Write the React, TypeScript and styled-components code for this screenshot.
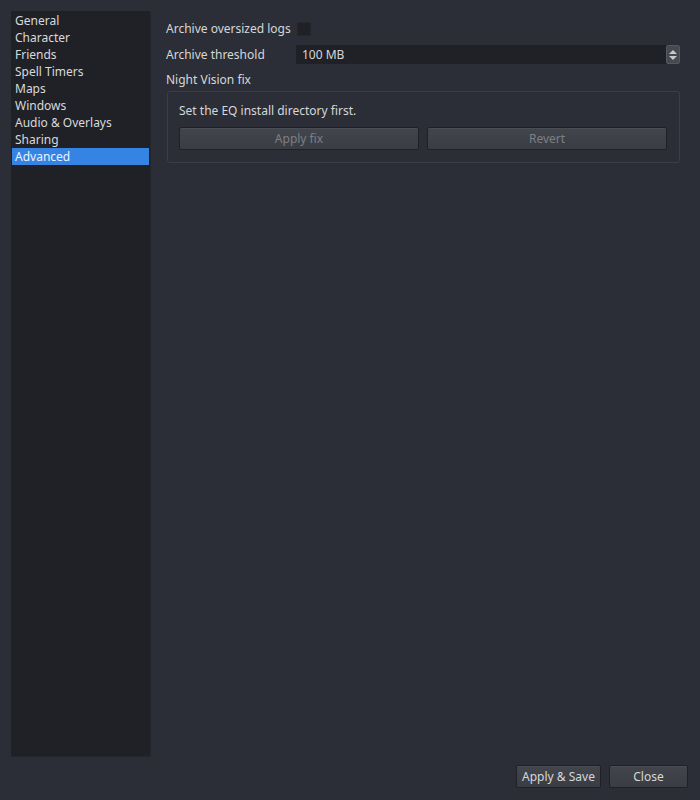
import React, { useState } from 'react'
import styled, { createGlobalStyle } from 'styled-components'

const GlobalStyle = createGlobalStyle`
  html, body {
    margin: 0;
    padding: 0;
    background: #2b2e36;
  }
  body {
    font-family: 'Noto Sans', 'Open Sans', sans-serif;
    font-size: 12px;
    color: #d6d7da;
  }
`

const Window = styled.div`
  width: 700px;
  height: 800px;
  box-sizing: border-box;
  padding: 11px 11px 12px 11px;
  display: flex;
  flex-direction: column;
  background: #2b2e36;
`

const Body = styled.div`
  flex: 1;
  display: flex;
  gap: 15px;
  min-height: 0;
`

const NavList = styled.ul`
  list-style: none;
  margin: 0;
  padding: 1px;
  width: 140px;
  box-sizing: border-box;
  background: #202126;
  border: 1px solid #25272d;
  border-width: 0 1px 1px 0;
`

const NavItem = styled.li<{ $active?: boolean }>`
  height: 17px;
  line-height: 17px;
  padding-left: 3px;
  color: ${({ $active }) => ($active ? '#eef3fb' : '#d8d9dc')};
  background: ${({ $active }) => ($active ? '#3584e4' : 'transparent')};
  white-space: nowrap;
  cursor: default;
`

const Page = styled.div`
  flex: 1;
  display: flex;
  flex-direction: column;
  padding: 7px 9px 0 0;
`

const FormRow = styled.div`
  display: flex;
  align-items: center;
  min-height: 21px;
  margin-bottom: 5px;
`

const Label = styled.span<{ $width?: number }>`
  width: ${({ $width }) => ($width ? `${$width}px` : 'auto')};
  flex-shrink: 0;
  white-space: nowrap;
`

const Check = styled.span`
  width: 14px;
  height: 14px;
  margin-left: 6px;
  border-radius: 2px;
  background: #202126;
  box-shadow: inset 0 0 0 1px #25272d;
`

const SpinBox = styled.div`
  flex: 1;
  height: 19px;
  display: flex;
  align-items: stretch;
  background: #202126;
  border-radius: 2px;
`

const SpinValue = styled.span`
  flex: 1;
  padding-left: 6px;
  line-height: 19px;
  color: #d6d7da;
`

const SpinArrows = styled.span`
  width: 14px;
  display: flex;
  align-items: center;
  justify-content: center;
  background: #464950;
  border: 1px solid #55585f;
  border-radius: 2px;
  box-sizing: border-box;
`

const SectionTitle = styled.div`
  line-height: 17px;
  margin-top: 1px;
  margin-bottom: 3px;
`

const Group = styled.fieldset`
  margin: 0 0 0 1px;
  padding: 10px 12px 12px 11px;
  border: 1px solid #3b3e46;
  border-radius: 3px;
  display: flex;
  flex-direction: column;
  gap: 7px;
  min-inline-size: 0;
`

const Note = styled.div`
  line-height: 18px;
`

const ButtonRow = styled.div`
  display: flex;
  gap: 8px;
`

const Button = styled.button<{ $grow?: boolean; $width?: number }>`
  flex: ${({ $grow }) => ($grow ? '1 1 0' : '0 0 auto')};
  width: ${({ $width }) => ($width ? `${$width}px` : 'auto')};
  height: 23px;
  padding: 0;
  white-space: nowrap;
  font-family: inherit;
  font-size: 12px;
  color: #d6d7da;
  background: linear-gradient(#42454c, #3a3d44);
  border: 1px solid #1f2126;
  border-radius: 2px;
  box-shadow: inset 0 1px 0 #4a4d54;

  &:disabled {
    color: #7c7f85;
  }
`

const Footer = styled.div`
  display: flex;
  justify-content: flex-end;
  gap: 8px;
  margin: 8px 1px 0 0;
`

const SpinGlyph = () => (
  <svg width="10" height="14" viewBox="0 0 10 14">
    <path d="M1 6 L5 2 L9 6 Z" fill="#c8c9cc" />
    <path d="M1 8 L5 12 L9 8 Z" fill="#c8c9cc" />
  </svg>
)

const sections = [
  'General',
  'Character',
  'Friends',
  'Spell Timers',
  'Maps',
  'Windows',
  'Audio & Overlays',
  'Sharing',
  'Advanced',
]

export default function App() {
  const [current, setCurrent] = useState('Advanced')

  return (
    <>
      <GlobalStyle />
      <Window>
        <Body>
          <NavList>
            {sections.map((name) => (
              <NavItem key={name} $active={name === current} onClick={() => setCurrent(name)}>
                {name}
              </NavItem>
            ))}
          </NavList>
          <Page>
            <FormRow>
              <Label>Archive oversized logs</Label>
              <Check />
            </FormRow>
            <FormRow>
              <Label $width={130}>Archive threshold</Label>
              <SpinBox>
                <SpinValue>100 MB</SpinValue>
                <SpinArrows>
                  <SpinGlyph />
                </SpinArrows>
              </SpinBox>
            </FormRow>
            <SectionTitle>Night Vision fix</SectionTitle>
            <Group>
              <Note>Set the EQ install directory first.</Note>
              <ButtonRow>
                <Button $grow disabled>
                  Apply fix
                </Button>
                <Button $grow disabled>
                  Revert
                </Button>
              </ButtonRow>
            </Group>
          </Page>
        </Body>
        <Footer>
          <Button $width={85}>Apply &amp; Save</Button>
          <Button $width={79}>Close</Button>
        </Footer>
      </Window>
    </>
  )
}
